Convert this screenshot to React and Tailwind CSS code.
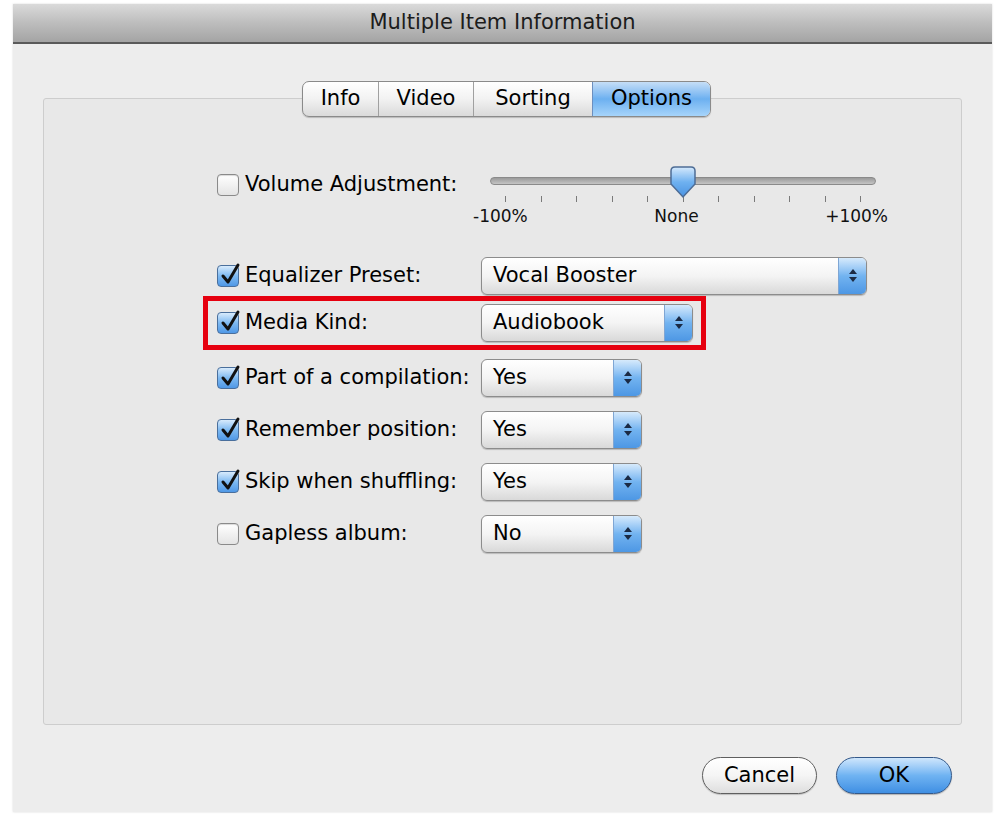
import React from 'react';

const font = "font-['DejaVu_Sans',_'Liberation_Sans',_sans-serif]";

function Check({ checked }) {
    if (!checked) {
        return (
            <span className="block h-[22px] w-[22px] shrink-0 rounded-[4px] border border-[#8a8a8a] bg-linear-to-b from-white to-[#e4e4e4] shadow-[inset_0_1px_1px_rgba(0,0,0,0.15)]" />
        );
    }
    return (
        <span className="relative block h-[22px] w-[22px] shrink-0 rounded-[4px] border border-[#4a6f9c] bg-linear-to-b from-[#d8ebfc] via-[#7db9f1] to-[#4f98e6]">
            <svg className="absolute -top-[4px] left-[1px]" width="22" height="24" viewBox="0 0 22 24">
                <path d="M4 14 L9 20 L19 3" fill="none" stroke="#111" strokeWidth="3" strokeLinecap="round" strokeLinejoin="round" />
            </svg>
        </span>
    );
}

function Popup({ value, className }) {
    return (
        <div className={`flex h-[38px] items-stretch rounded-[6px] border border-[#8c8c8c] bg-linear-to-b from-white via-[#f4f4f4] to-[#d9d9d9] shadow-[0_1px_1px_rgba(0,0,0,0.2)] ${className}`}>
            <span className="flex flex-1 items-center pl-[11px] text-[21px] text-black">{value}</span>
            <span className="flex w-[28px] flex-col items-center justify-center gap-[3px] rounded-r-[5px] border-l border-[#7fa6d4] bg-linear-to-b from-[#d6eafc] via-[#72b3f0] to-[#4d97e4]">
                <svg width="8" height="5" viewBox="0 0 8 5"><path d="M0 5 L4 0 L8 5 Z" fill="#1b2a44" /></svg>
                <svg width="8" height="5" viewBox="0 0 8 5"><path d="M0 0 L4 5 L8 0 Z" fill="#1b2a44" /></svg>
            </span>
        </div>
    );
}

function Row({ checked, label, children, className = '' }) {
    return (
        <div className={`flex items-center ${className}`}>
            <div className="flex w-[264px] items-center gap-[6px]">
                <Check checked={checked} />
                <span className="whitespace-nowrap text-[21px] text-black">{label}</span>
            </div>
            {children}
        </div>
    );
}

function Slider() {
    return (
        <div className="relative w-[395px] pl-[9px]">
            <div className="relative mt-[8px] h-[8px] w-[386px] rounded-full border border-[#8a8a8a] bg-linear-to-b from-[#9a9a9a] to-[#c4c4c4]">
                <svg className="absolute -top-[12px] left-[177px]" width="30" height="34" viewBox="0 0 30 34">
                    <defs>
                        <linearGradient id="thumb" x1="0" y1="0" x2="0" y2="1">
                            <stop offset="0" stopColor="#d5e9fc" />
                            <stop offset="0.5" stopColor="#6fb1f0" />
                            <stop offset="1" stopColor="#4a93e2" />
                        </linearGradient>
                    </defs>
                    <path d="M3 5 Q3 1 7 1 H23 Q27 1 27 5 V18 L15 31 L3 18 Z" fill="url(#thumb)" stroke="#4d6c95" strokeWidth="1.5" />
                </svg>
            </div>
            <div className="mt-[11px] flex w-[386px] justify-between px-[15px]">
                {[0, 1, 2, 3, 4, 5, 6, 7, 8, 9, 10].map((i) => (
                    <span key={i} className="block h-[6px] w-[1px] bg-[#7a7a7a]" />
                ))}
            </div>
            <div className="-ml-[17px] mt-[2px] flex w-[415px] justify-between text-[17px] text-[#111]">
                <span>-100%</span>
                <span>None</span>
                <span>+100%</span>
            </div>
        </div>
    );
}

export default function App() {
    const tabs = ['Info', 'Video', 'Sorting', 'Options'];

    return (
        <div className={`min-h-[829px] bg-white pl-[13px] pt-[4px] ${font}`}>
            <div className="flex h-[808px] w-[979px] flex-col bg-[#ededed] shadow-[0_0_2px_rgba(0,0,0,0.15)]">
                <div className="flex h-[40px] items-center justify-center border-b-2 border-[#5a5a5a] bg-linear-to-b from-[#dadada] via-[#bdbdbd] to-[#a4a4a4] text-[21px] text-[#1c1c1c]">
                    Multiple Item Information
                </div>

                <div className="flex flex-1 flex-col px-[30px] pt-[54px]">
                    <div className="flex h-[627px] flex-col rounded-[3px] border border-[#cdcdcd] bg-[#e8e8e8]">
                        <div className="-mt-[18px] flex justify-center pl-[8px]">
                            <div className="flex h-[36px] overflow-hidden rounded-[7px] border border-[#8a8a8a] bg-linear-to-b from-white via-[#f2f2f2] to-[#dadada] text-[21px] text-black shadow-[0_1px_1px_rgba(0,0,0,0.2)]">
                                {tabs.map((t, i) => (
                                    <div
                                        key={t}
                                        className={
                                            t === 'Options'
                                                ? 'flex w-[118px] items-center justify-center border-l border-[#6c8fbf] bg-linear-to-b from-[#c5def7] via-[#6cb0f0] to-[#a6d4fa]'
                                                : i === 0
                                                ? 'flex w-[75px] items-center justify-center'
                                                : t === 'Video'
                                                ? 'flex w-[95px] items-center justify-center border-l border-[#a0a0a0]'
                                                : 'flex w-[119px] items-center justify-center border-l border-[#a0a0a0]'
                                        }
                                    >
                                        {t}
                                    </div>
                                ))}
                            </div>
                        </div>

                        <div className="flex flex-col pl-[173px] pt-[52px]">
                            <Row checked={false} label="Volume Adjustment:" className="!items-start">
                                <Slider />
                            </Row>

                            <Row checked label="Equalizer Preset:" className="mt-[27px]">
                                <Popup value="Vocal Booster" className="w-[386px]" />
                            </Row>

                            <div className="-ml-[14px] mt-[1px] w-fit border-[5px] border-[#e6000f] py-[3px] pl-[9px] pr-[8px]">
                                <Row checked label="Media Kind:">
                                    <Popup value="Audiobook" className="w-[212px]" />
                                </Row>
                            </div>

                            <Row checked label="Part of a compilation:" className="mt-[9px]">
                                <Popup value="Yes" className="w-[161px]" />
                            </Row>
                            <Row checked label="Remember position:" className="mt-[14px]">
                                <Popup value="Yes" className="w-[161px]" />
                            </Row>
                            <Row checked label="Skip when shuffling:" className="mt-[14px]">
                                <Popup value="Yes" className="w-[161px]" />
                            </Row>
                            <Row checked={false} label="Gapless album:" className="mt-[14px]">
                                <Popup value="No" className="w-[161px]" />
                            </Row>
                        </div>
                    </div>

                    <div className="mt-[32px] flex justify-end gap-[19px] pr-[10px]">
                        <button className="h-[37px] w-[115px] rounded-full border border-[#5f5f5f] bg-linear-to-b from-white via-[#f5f5f5] to-[#dedede] text-[21px] text-black shadow-[0_1px_1px_rgba(0,0,0,0.2)]">
                            Cancel
                        </button>
                        <button className="h-[37px] w-[116px] rounded-full border border-[#34598a] bg-linear-to-b from-[#cfe6fc] via-[#6fb3f2] to-[#3f8fe3] text-[21px] text-black shadow-[0_1px_1px_rgba(0,0,0,0.25)]">
                            OK
                        </button>
                    </div>
                </div>
            </div>
        </div>
    );
}
